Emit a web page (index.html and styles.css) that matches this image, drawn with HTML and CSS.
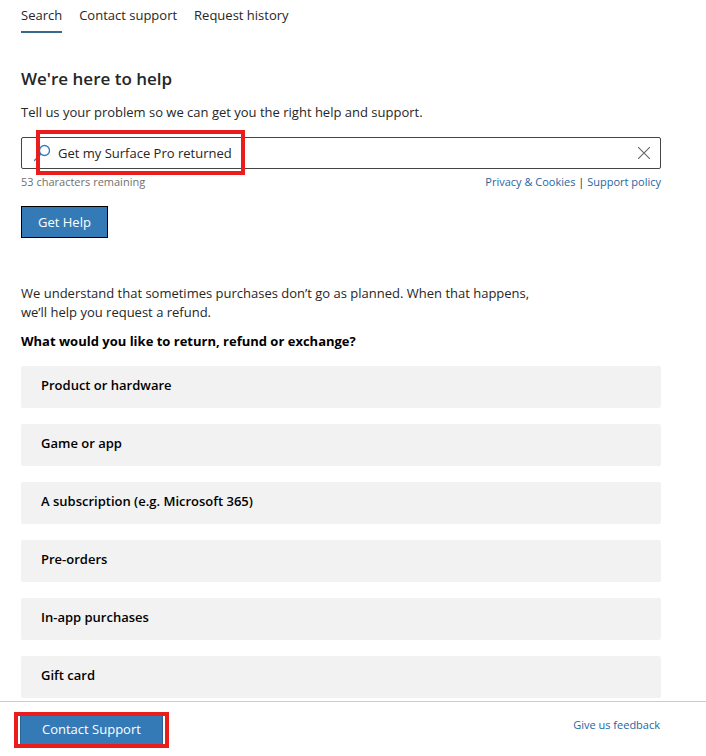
FILE: index.html
```html
<!DOCTYPE html>
<html lang="en">
<head>
  <meta charset="utf-8">
  <title>Contact support</title>
  <link rel="stylesheet" href="styles.css">
</head>
<body>

  <nav class="tabs">
    <a class="tab active" href="#search">Search</a>
    <a class="tab" href="#contact">Contact support</a>
    <a class="tab" href="#history">Request history</a>
  </nav>

  <main class="content">
    <h1>We're here to help</h1>
    <form class="help-form">
      <label class="intro" for="problem">Tell us your problem so we can get you the right help and support.</label>
      <div class="search-box">
        <svg class="search-icon" width="18" height="18" viewBox="0 0 18 18" fill="none" stroke="#2f7fb8" stroke-width="1.3">
          <circle cx="10.5" cy="6.5" r="5"/>
          <path d="M7 10L0 17"/>
        </svg>
        <input type="text" id="problem" value="Get my Surface Pro returned">
        <button type="button" class="clear" aria-label="Clear">
          <svg width="12" height="12" viewBox="0 0 12 12" stroke="#666" stroke-width="1.1">
            <path d="M0 0L12 12M12 0L0 12"/>
          </svg>
        </button>
        <div class="highlight highlight-search"></div>
      </div>
      <div class="notes">
        <span class="remaining">53 characters remaining</span>
        <span><a href="#privacy">Privacy &amp; Cookies</a> | <a href="#policy">Support policy</a></span>
      </div>
      <button type="button" class="get-help">Get Help</button>
    </form>

    <p class="refund">We understand that sometimes purchases don’t go as planned. When that happens, we’ll help you request a refund.</p>
    <h2>What would you like to return, refund or exchange?</h2>
    <div class="options">
      <button type="button" class="option">Product or hardware</button>
      <button type="button" class="option">Game or app</button>
      <button type="button" class="option">A subscription (e.g. Microsoft 365)</button>
      <button type="button" class="option">Pre-orders</button>
      <button type="button" class="option">In-app purchases</button>
      <button type="button" class="option">Gift card</button>
    </div>
  </main>

  <footer class="footer">
    <div class="contact-wrap">
      <button type="button" class="contact">Contact Support</button>
      <div class="highlight highlight-contact"></div>
    </div>
    <a class="feedback" href="#feedback">Give us feedback</a>
  </footer>

</body>
</html>
```
FILE: styles.css
```css
* {
  box-sizing: border-box;
}
body {
  margin: 0;
  font-family: "Open Sans", "Noto Sans", sans-serif;
  font-size: 13px;
  line-height: 19px;
  color: #262626;
  background: #fff;
}
button, input {
  font: inherit;
}
a {
  color: #1f66a0;
  text-decoration: none;
}
.tabs {
  display: flex;
  gap: 17px;
  padding: 6px 45px 0 21px;
}
.tab {
  color: #262626;
  padding-bottom: 6px;
  border-bottom: 2px solid transparent;
}
.tab.active {
  border-bottom-color: #38698f;
}
.content {
  padding: 34px 45px 0 21px;
}
h1 {
  margin: 0 0 12px;
  font-size: 17px;
  line-height: 24px;
  font-weight: 600;
}
.intro {
  display: block;
  margin-bottom: 15px;
}
.search-box {
  position: relative;
  display: flex;
  align-items: center;
  height: 32px;
  padding: 0 8px 0 12px;
  border: 1px solid #444;
  border-radius: 2px;
}
.search-icon {
  flex: none;
  margin-right: 6px;
}
.search-box input {
  flex: 1;
  min-width: 0;
  padding: 0;
  border: 0;
  outline: 0;
  color: #262626;
  background: none;
}
.clear {
  display: flex;
  padding: 2px;
  border: 0;
  background: none;
}
.highlight {
  position: absolute;
  border: 4px solid #ea1c1c;
  pointer-events: none;
}
.highlight-search {
  top: -8px;
  left: 14px;
  width: 209px;
  height: 45px;
}
.notes {
  display: flex;
  justify-content: space-between;
  margin-top: 3px;
  font-size: 11px;
}
.remaining {
  color: #707070;
}
.get-help {
  display: block;
  height: 32px;
  margin-top: 15px;
  padding: 0 16px;
  border: 1px solid #000;
  color: #fff;
  background: #347ab7;
}
.refund {
  max-width: 525px;
  margin: 46px 0 10px;
}
h2 {
  margin: 0 0 15px;
  font-size: 13px;
  line-height: 19px;
  font-weight: 700;
  color: #000;
}
.options {
  display: flex;
  flex-direction: column;
  gap: 16px;
}
.option {
  height: 42px;
  padding: 0 20px 4px;
  border: 0;
  border-radius: 2px;
  text-align: left;
  font-weight: 600;
  color: #000;
  background: #f2f2f2;
}
.footer {
  display: flex;
  justify-content: space-between;
  align-items: flex-start;
  margin-top: 3px;
  padding: 13px 46px 8px 20px;
  border-top: 1px solid #ccc;
}
.contact-wrap {
  position: relative;
}
.contact {
  display: block;
  height: 30px;
  padding: 0 21px 2px;
  border: 1px solid #2a6496;
  color: #fff;
  background: #347ab7;
}
.highlight-contact {
  top: -3px;
  left: -6px;
  right: -6px;
  bottom: -3px;
}
.feedback {
  font-size: 11px;
}
```
